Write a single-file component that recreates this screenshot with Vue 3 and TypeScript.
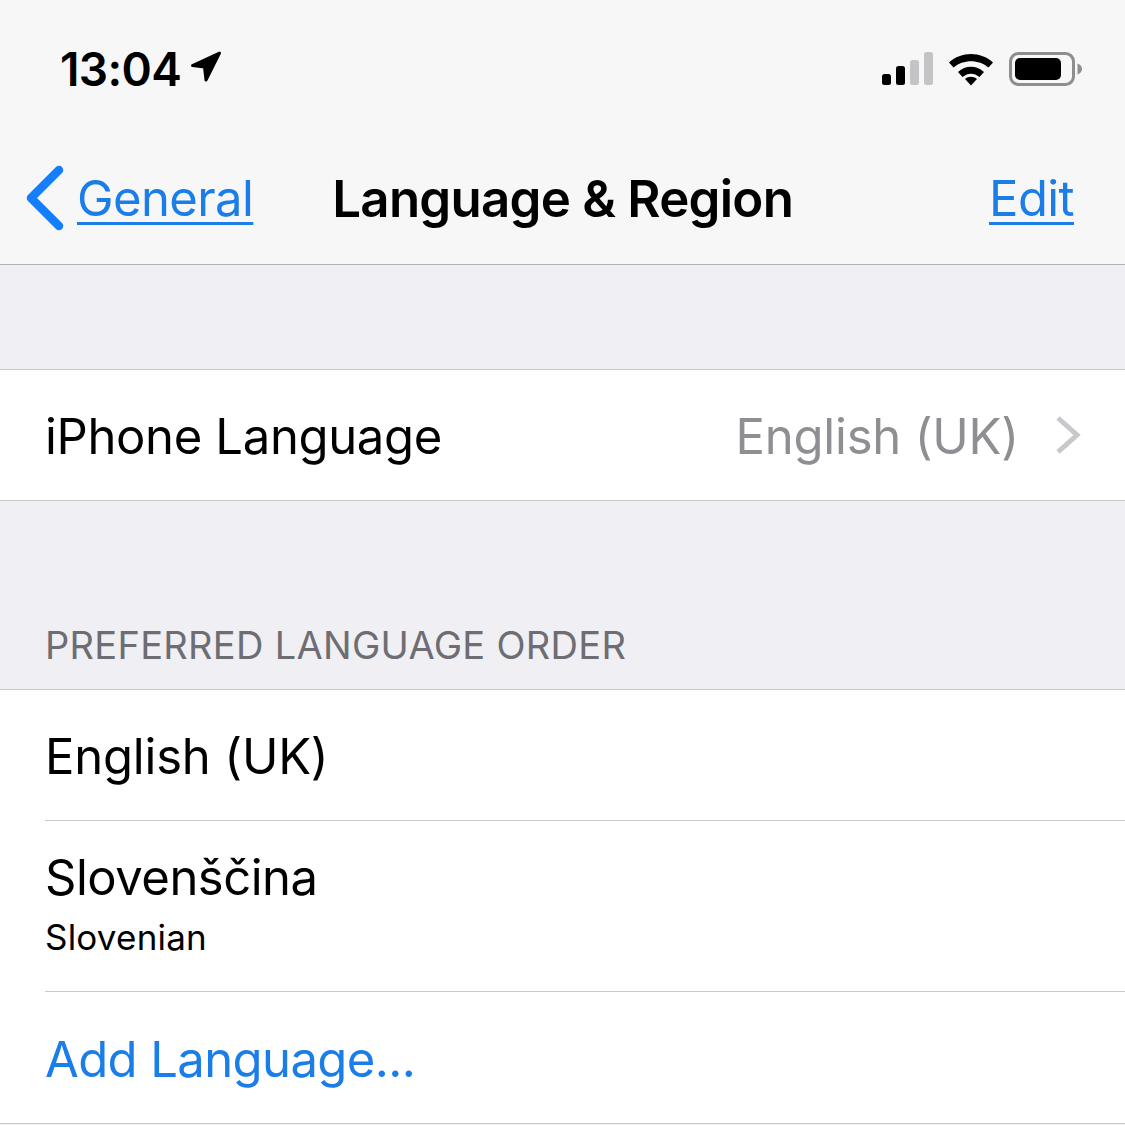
<template>
  <div class="screen">
    <header class="top">
      <div class="status">
        <div class="clock">
          <span class="time">13:04</span>
          <svg class="arrow" width="32" height="32" viewBox="0 0 32 32">
            <path d="M29.500 2 2.500 14.500 14.500 16 16 29Z" stroke="#000" stroke-width="3" stroke-linejoin="round" />
          </svg>
        </div>
        <div class="indicators">
          <svg class="signal" width="52" height="34" viewBox="0 0 52 34">
            <rect x="0" y="22" width="9" height="11" rx="2.500" fill="#000" />
            <rect x="14" y="14" width="9" height="19" rx="2.500" fill="#000" />
            <rect x="28" y="8" width="9" height="25" rx="2.500" fill="#c4c4c6" />
            <rect x="42" y="0" width="9" height="33" rx="2.500" fill="#c4c4c6" />
          </svg>
          <svg width="46" height="34" viewBox="0 0 46 34">
            <path d="M1 10.500C13-1 33-1 45 10.500L40.500 15.500C31 7 15 7 5.500 15.500Z" />
            <path d="M10 20C17.500 13 28.500 13 36 20L31.500 25C26 20.500 20 20.500 14.500 25Z" />
            <path d="M17 27C20.500 24 25.500 24 29 27L23 33.500Z" />
          </svg>
          <svg width="74" height="34" viewBox="0 0 74 34">
            <rect x="1.500" y="1.500" width="63" height="31" rx="8" fill="none" stroke="#8e8e90" stroke-width="3" />
            <rect x="6" y="6" width="46" height="22" rx="5" fill="#000" />
            <path d="M68.500 11.500c3 1 4.500 3 4.500 5.500s-1.500 4.500-4.500 5.500Z" fill="#8e8e90" />
          </svg>
        </div>
      </div>
      <nav class="nav">
        <a class="back">
          <svg width="42" height="66" viewBox="0 0 42 66">
            <path d="M35 5 7 33l28 28" fill="none" stroke="#147efb" stroke-width="8.500" stroke-linecap="round" stroke-linejoin="round" />
          </svg>
          <span class="link">General</span>
        </a>
        <h1>Language &amp; Region</h1>
        <a class="link edit">Edit</a>
      </nav>
    </header>

    <section class="first">
      <div class="row plain">
        <span>iPhone Language</span>
        <span class="value">
          English (UK)
          <svg width="26" height="40" viewBox="0 0 26 40">
            <path d="M3 3l19 17L3 37" fill="none" stroke="#c7c7cc" stroke-width="5" />
          </svg>
        </span>
      </div>
    </section>

    <h2>PREFERRED LANGUAGE ORDER</h2>

    <section class="list">
      <div v-for="lang in languages" :key="lang.name" class="item">
        <div class="name">{{ lang.name }}</div>
        <div v-if="lang.sub" class="sub">{{ lang.sub }}</div>
      </div>
      <div class="item add">Add Language...</div>
    </section>
  </div>
</template>

<script setup lang="ts">
const languages: { name: string; sub?: string }[] = [
  { name: 'English (UK)' },
  { name: 'Slovenščina', sub: 'Slovenian' },
];
</script>

<style>
body {
  background: #efeff4;
}
</style>

<style scoped>
.screen {
  width: 1125px;
  height: 1125px;
  overflow: hidden;
  background: #efeff4;
  font-family: Inter, "Liberation Sans", sans-serif;
  color: #000;
}

.top {
  height: 265px;
  box-sizing: border-box;
  background: #f7f7f7;
  border-bottom: 1px solid #b2b2b2;
}

.status {
  height: 132px;
  display: flex;
  justify-content: space-between;
  align-items: center;
  padding: 6px 42px 0 60px;
  box-sizing: border-box;
}

.clock {
  display: flex;
  align-items: center;
  gap: 9px;
}

.time {
  font-size: 46px;
  font-weight: 600;
  letter-spacing: -0.600px;
}

.arrow {
  margin-top: -4px;
}

.indicators {
  display: flex;
  align-items: center;
  gap: 15px;
}

.signal {
  margin-right: -1px;
}

.nav {
  height: 132px;
  display: flex;
  align-items: center;
  padding: 0 51px 0 24px;
}

.back {
  display: flex;
  align-items: center;
  gap: 11px;
}

.link {
  font-size: 49px;
  color: #1a7de8;
  text-decoration: underline;
  text-decoration-thickness: 3px;
  text-underline-offset: 6px;
  letter-spacing: -0.600px;
}

.edit {
  margin-left: auto;
}

h1 {
  margin: 0 0 0 79px;
  font-size: 51px;
  font-weight: 600;
  letter-spacing: -0.750px;
}

.first {
  margin-top: 104px;
  background: #fff;
  border-top: 1px solid #c8c7cc;
  border-bottom: 1px solid #c8c7cc;
}

.row {
  height: 130px;
  box-sizing: border-box;
  padding: 2px 44px 0 45px;
  display: flex;
  align-items: center;
  justify-content: space-between;
  font-size: 49px;
  letter-spacing: -0.350px;
}

.value {
  display: flex;
  align-items: center;
  gap: 36px;
  color: #8e8e93;
  letter-spacing: -0.200px;
}

.value svg {
  margin-top: -2px;
}

h2 {
  margin: 0;
  height: 188px;
  box-sizing: border-box;
  padding: 122px 0 0 45px;
  font-size: 38px;
  line-height: 44px;
  font-weight: 400;
  letter-spacing: 0.300px;
  color: #6d6d72;
}

.list {
  background: #fff;
  border-top: 1px solid #c8c7cc;
  border-bottom: 1px solid #c8c7cc;
  padding-left: 45px;
}

.item {
  min-height: 131px;
  box-sizing: border-box;
  padding-top: 4px;
  display: flex;
  flex-direction: column;
  justify-content: center;
  border-bottom: 1px solid #c8c7cc;
  font-size: 49px;
  letter-spacing: -0.200px;
}

.item:last-child {
  border-bottom: none;
}

.name {
  line-height: 60px;
}

.sub {
  margin-top: 7px;
  font-size: 35px;
  line-height: 44px;
  letter-spacing: 0.200px;
}

.item:nth-child(2) {
  height: 171px;
  padding-top: 0;
  padding-bottom: 6px;
}

.item:nth-child(2) .name {
  letter-spacing: -0.500px;
}

.add {
  color: #1a7de8;
  letter-spacing: -0.600px;
}
</style>
